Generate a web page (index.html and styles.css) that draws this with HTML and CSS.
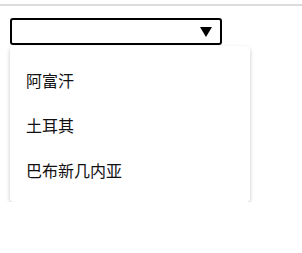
FILE: index.html
```
<!DOCTYPE html>
<html>
<head>
<meta charset="utf-8">
<link rel="stylesheet" href="styles.css">
</head>
<body>
<div class="topline"></div>
<div class="wrap">
  <div class="select">
    <svg class="arrow" width="12" height="10" viewBox="0 0 12 10"><polygon points="0,0 12,0 6,10" fill="#000"/></svg>
  </div>
  <div class="menu">
    <div class="item">阿富汗</div>
    <div class="item">土耳其</div>
    <div class="item">巴布新几内亚</div>
  </div>
</div>
</body>
</html>
```
FILE: styles.css
```
html, body {
  margin: 0;
  padding: 0;
  background: #fff;
  font-family: "Noto Sans CJK SC", "Noto Sans", sans-serif;
}
.topline {
  margin-top: 4px;
  height: 2px;
  background: #dcdcdc;
}
.wrap {
  padding: 12px 0 0 10px;
}
.select {
  box-sizing: border-box;
  width: 212px;
  height: 27px;
  border: 2px solid #000;
  border-radius: 3px;
  display: flex;
  align-items: center;
  justify-content: flex-end;
  padding-right: 8px;
}
.arrow {
  display: block;
}
.menu {
  margin-top: 1px;
  width: 240px;
  box-sizing: border-box;
  padding: 11px 0 10px;
  background: #fff;
  border-radius: 4px;
  box-shadow: 0 2px 4px rgba(0,0,0,0.22);
}
.item {
  height: 45px;
  display: flex;
  align-items: center;
  padding-left: 16px;
  font-size: 16px;
  color: #111;
}
```
